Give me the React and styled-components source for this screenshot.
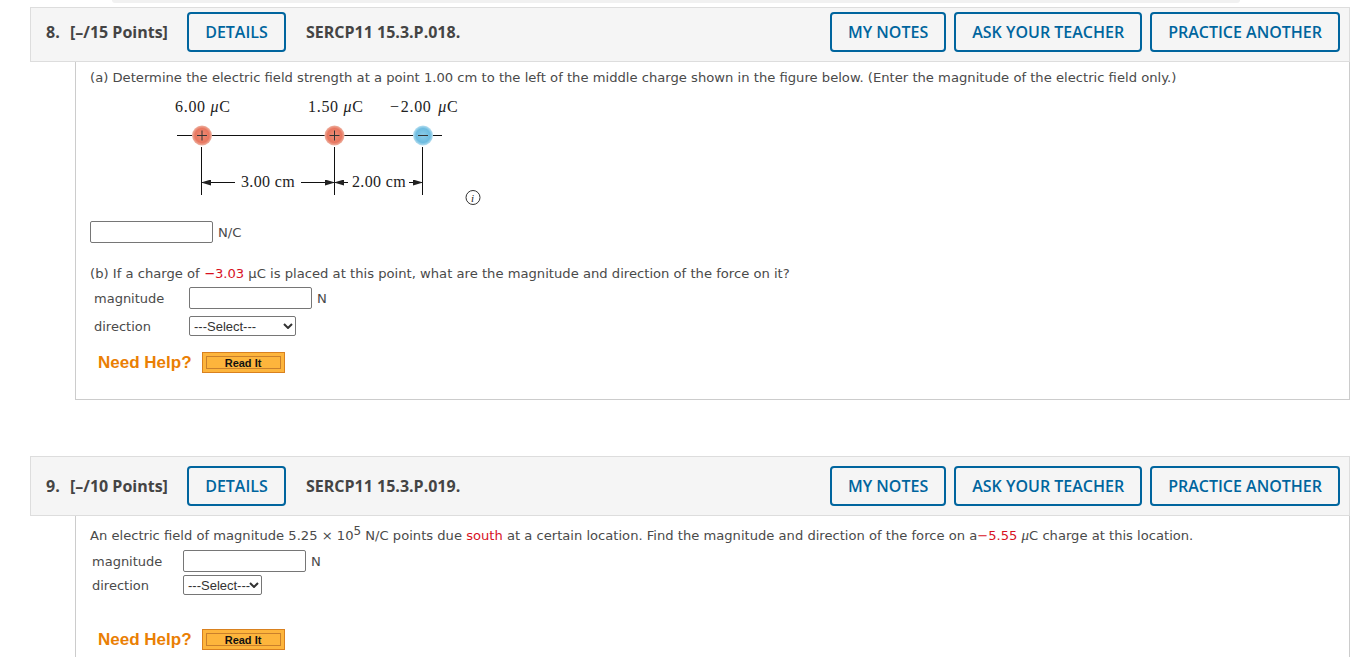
import styled, { createGlobalStyle } from 'styled-components';

const GlobalStyle = createGlobalStyle`
  html, body {
    margin: 0;
    padding: 0;
    height: 657px;
    overflow: hidden;
    background: #fff;
  }
`;

const BLUE = '#00659e';
const CHEVRON =
  "data:image/svg+xml,%3Csvg xmlns='http://www.w3.org/2000/svg' width='10' height='6'%3E%3Cpath d='M1 1l4 4 4-4' fill='none' stroke='%23333' stroke-width='2'/%3E%3C/svg%3E";

function ChargeFigure() {
  const serif = { fontFamily: '"Liberation Serif", serif', fontSize: 16, letterSpacing: 0.7, fill: '#222' };
  const charges = [
    { x: 32, lineX: 31.5, fill: 'url(#redCharge)', sign: '+' },
    { x: 164.5, lineX: 164.5, fill: 'url(#redCharge)', sign: '+' },
    { x: 253, lineX: 252.5, fill: 'url(#blueCharge)', sign: '-' },
  ];
  return (
    <FigureSvg width="320" height="116" viewBox="0 0 320 116">
      <defs>
        <radialGradient id="redCharge">
          <stop offset="0%" stopColor="#ee8f78" />
          <stop offset="70%" stopColor="#e8765f" />
          <stop offset="100%" stopColor="#eeb3a2" />
        </radialGradient>
        <radialGradient id="blueCharge">
          <stop offset="0%" stopColor="#8ccbe8" />
          <stop offset="70%" stopColor="#6dbce0" />
          <stop offset="100%" stopColor="#b9e0f1" />
        </radialGradient>
        <marker id="arrow" markerWidth="10" markerHeight="6" refX="9" refY="3" orient="auto-start-reverse">
          <path d="M0 0 L10 3 L0 6 Z" fill="#222" />
        </marker>
      </defs>
      <text x="5" y="17" {...serif}>6.00 <tspan fontStyle="italic">μ</tspan>C</text>
      <text x="138" y="17" {...serif}>1.50 <tspan fontStyle="italic">μ</tspan>C</text>
      <text x="220" y="17" {...serif}>−<tspan dx="1">2.00</tspan> <tspan fontStyle="italic" dx="2">μ</tspan>C</text>
      <line x1="7" y1="40.5" x2="272" y2="40.5" stroke="#111" />
      {charges.map(({ x, lineX, fill, sign }) => (
        <g key={x}>
          <circle cx={x} cy="40.5" r="10" fill={fill} />
          <line x1={x - 5} y1="40.5" x2={x + 5} y2="40.5" stroke="#333" />
          {sign === '+' && <line x1={x} y1="35.5" x2={x} y2="45.5" stroke="#333" />}
          <line x1={lineX} y1="52" x2={lineX} y2="100" stroke="#111" />
        </g>
      ))}
      <line x1="32" y1="87.5" x2="65" y2="87.5" stroke="#111" markerStart="url(#arrow)" />
      <text x="71" y="92" {...serif} letterSpacing="0.35">3.00 cm</text>
      <line x1="131" y1="87.5" x2="164" y2="87.5" stroke="#111" markerEnd="url(#arrow)" />
      <line x1="165" y1="87.5" x2="178" y2="87.5" stroke="#111" markerStart="url(#arrow)" />
      <text x="182" y="92" {...serif} letterSpacing="0.35">2.00 cm</text>
      <line x1="239" y1="87.5" x2="252" y2="87.5" stroke="#111" markerEnd="url(#arrow)" />
      <circle cx="303" cy="102.5" r="7" fill="none" stroke="#333" />
      <text x="301" y="106.5" fontFamily='"Liberation Serif", serif' fontStyle="italic" fontSize="11" fill="#222">i</text>
    </FigureSvg>
  );
}

function QuestionHeader({ number, points, code, $paddingTop }) {
  return (
    <Header $paddingTop={$paddingTop}>
      <Number>{number}.</Number>
      <Points>[–/{points} Points]</Points>
      <DetailsButton>DETAILS</DetailsButton>
      <Code>{code}</Code>
      <Actions>
        <OutlineButton>MY NOTES</OutlineButton>
        <OutlineButton>ASK YOUR TEACHER</OutlineButton>
        <OutlineButton>PRACTICE ANOTHER</OutlineButton>
      </Actions>
    </Header>
  );
}

function HelpRow({ $top }) {
  return (
    <Help $top={$top}>
      <HelpLabel>Need Help?</HelpLabel>
      <ReadIt>
        <ReadItInner>Read It</ReadItInner>
      </ReadIt>
    </Help>
  );
}

function AnswerGrid({ $labelWidth, $left, $selectWidth, $rowGap, $top }) {
  return (
    <Answers $labelWidth={$labelWidth} $left={$left} $rowGap={$rowGap} $top={$top}>
      <Label>magnitude</Label>
      <InputRow>
        <TextInput />
        <Unit>N</Unit>
      </InputRow>
      <Label>direction</Label>
      <Select $width={$selectWidth} defaultValue="">
        <option value="">---Select---</option>
      </Select>
    </Answers>
  );
}

export default function App() {
  return (
    <Page>
      <GlobalStyle />
      <TopStrip />
      <Question>
        <QuestionHeader number={8} points={15} code="SERCP11 15.3.P.018." $paddingTop={4} />
        <Body $height={338}>
          <Prompt $top={7}>
            (a) Determine the electric field strength at a point 1.00 cm to the left of the middle charge shown in the figure below. (Enter the magnitude of the electric field only.)
          </Prompt>
          <ChargeFigure />
          <InputRow $top={10}>
            <TextInput />
            <Unit>N/C</Unit>
          </InputRow>
          <Prompt $top={22}>
            (b) If a charge of <Red>−3.03</Red> μC is placed at this point, what are the magnitude and direction of the force on it?
          </Prompt>
          <AnswerGrid $labelWidth={95} $left={4} $selectWidth={107} $rowGap={7} $top={4} />
          <HelpRow $top={16} />
        </Body>
      </Question>
      <Question $top={56}>
        <QuestionHeader number={9} points={10} code="SERCP11 15.3.P.019." $paddingTop={9} />
        <Body $height={160}>
          <Prompt $top={11} $size={13.12}>
            An electric field of magnitude 5.25 × 10<Sup>5</Sup> N/C points due <Red>south</Red> at a certain location. Find the magnitude and direction of the force on a<Red>−5.55</Red> <Mu>μ</Mu>C charge at this location.
          </Prompt>
          <AnswerGrid $labelWidth={91} $left={2} $selectWidth={79} $rowGap={3} $top={5} />
          <HelpRow $top={34} />
        </Body>
      </Question>
    </Page>
  );
}

const Page = styled.div`
  width: 1362px;
  height: 657px;
  overflow: hidden;
  font-family: 'DejaVu Sans', Verdana, sans-serif;
  font-size: 13.15px;
  color: #4a4a4a;
`;

const TopStrip = styled.div`
  height: 3px;
  margin: 0 122px 0 112px;
  background: #f1f1f1;
  border-radius: 0 0 8px 8px;
`;

const Question = styled.section`
  margin: ${({ $top }) => $top || 4}px 12px 0 30px;
`;

const Header = styled.header`
  display: flex;
  align-items: flex-start;
  box-sizing: border-box;
  padding: ${({ $paddingTop }) => $paddingTop}px 9px 9px 15px;
  background: #f5f5f5;
  border: 1px solid #ddd;
  font-family: 'Open Sans', 'Noto Sans', sans-serif;
  font-size: 16px;
  font-weight: 600;
  line-height: 40px;
  color: #444;
`;

const Number = styled.span`
  width: 24px;
  font-weight: 700;
`;

const Points = styled.span`
  width: 117px;
  font-weight: 700;
`;

const Code = styled.span`
  margin-left: 20px;
  font-weight: 700;
`;

const Actions = styled.div`
  display: flex;
  gap: 8px;
  margin-left: auto;
`;

const OutlineButton = styled.button`
  height: 40px;
  box-sizing: border-box;
  padding: 0 16px;
  background: transparent;
  border: 2px solid ${BLUE};
  border-radius: 4px;
  color: ${BLUE};
  font: inherit;
  font-weight: 600;
  line-height: 36px;
`;

const DetailsButton = styled(OutlineButton)`
  width: 99px;
  padding: 0;
`;

const Body = styled.div`
  display: flow-root;
  height: ${({ $height }) => $height}px;
  box-sizing: border-box;
  margin-left: 45px;
  padding-left: 14px;
  border: 1px solid #ccc;
  border-top: 0;
`;

const Prompt = styled.p`
  margin: ${({ $top }) => $top}px 0 0;
  font-size: ${({ $size }) => ($size ? `${$size}px` : 'inherit')};
  line-height: 18px;
  white-space: nowrap;
`;

const Red = styled.span`
  color: #d8121f;
`;

const Sup = styled.sup`
  font-size: 12px;
  line-height: 0;
`;

const Mu = styled.span`
  font-family: 'Liberation Serif', serif;
  font-style: italic;
  font-size: 15px;
  line-height: 0;
`;

const FigureSvg = styled.svg`
  display: block;
  margin: 8px 0 0 80px;
`;

const InputRow = styled.div`
  display: flex;
  align-items: center;
  gap: 5px;
  margin-top: ${({ $top }) => $top || 0}px;
`;

const TextInput = styled.input`
  width: 123px;
  height: 22px;
  box-sizing: border-box;
  padding: 1px 2px;
  border: 1px solid #767676;
  border-radius: 2px;
  background: #fff;
`;

const Unit = styled.span`
  padding-top: 2px;
  line-height: 20px;
`;

const Answers = styled.div`
  display: grid;
  grid-template-columns: ${({ $labelWidth }) => $labelWidth}px 1fr;
  row-gap: ${({ $rowGap }) => $rowGap}px;
  align-items: center;
  justify-items: start;
  margin: ${({ $top }) => $top}px 0 0 ${({ $left }) => $left}px;
`;

const Label = styled.span`
  padding-top: 2px;
  line-height: 18px;
  font-size: 13px;
`;

const Select = styled.select`
  appearance: none;
  width: ${({ $width }) => $width}px;
  height: 20px;
  box-sizing: border-box;
  padding: 0 0 0 4px;
  border: 1px solid #767676;
  border-radius: 2px;
  background: #fff url("${CHEVRON}") no-repeat right 2px center;
  color: #333;
  font-family: 'Liberation Sans', Arial, sans-serif;
  font-size: 13px;
`;

const Help = styled.div`
  display: flex;
  align-items: center;
  gap: 10px;
  margin: ${({ $top }) => $top}px 0 0 8px;
`;

const HelpLabel = styled.span`
  font-family: 'Liberation Sans', Arial, sans-serif;
  font-size: 17px;
  font-weight: 700;
  line-height: 21px;
  color: #ea7f04;
`;

const ReadIt = styled.button`
  width: 83px;
  height: 21px;
  box-sizing: border-box;
  padding: 3px;
  background: #fdb53c;
  border: 1px solid #d9811f;
`;

const ReadItInner = styled.span`
  display: flex;
  align-items: center;
  justify-content: center;
  height: 100%;
  box-sizing: border-box;
  border: 1px solid #c9802c;
  font-family: 'Liberation Sans', Arial, sans-serif;
  font-size: 11px;
  font-weight: 700;
  color: #111;
`;
